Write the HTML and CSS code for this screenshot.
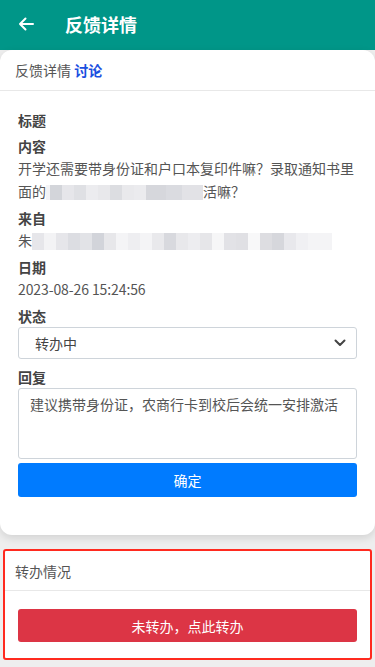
FILE: index.html
```html
<!DOCTYPE html>
<html lang="zh-CN">
<head>
<meta charset="utf-8">
<meta name="viewport" content="width=device-width, initial-scale=1">
<title>反馈详情</title>
<link rel="stylesheet" href="styles.css">
</head>
<body>
<header class="topbar">
  <svg class="back" width="16" height="14" viewBox="0 0 16 14" aria-hidden="true">
    <path d="M15 7H2M7.5 1.5L2 7l5.5 5.5" fill="none" stroke="#fff" stroke-width="2" stroke-linecap="round" stroke-linejoin="round"/>
  </svg>
  <h1 class="title">反馈详情</h1>
</header>

<main class="page">
  <section class="card detail">
    <div class="card-head">反馈详情 <span class="tab-active">讨论</span></div>
    <div class="card-body">
      <div class="label first">标题</div>
      <div class="value"></div>
      <div class="label">内容</div>
      <div class="value"><span class="line">开学还需要带身份证和户口本复印件嘛？录取通知书里</span><span class="line">面的<span class="mosaic m1"></span>活嘛？</span></div>
      <div class="label">来自</div>
      <div class="value">朱<span class="mosaic m2"></span></div>
      <div class="label">日期</div>
      <div class="value date">2023-08-26 15:24:56</div>
      <div class="label">状态</div>
      <div class="select">
        <span>转办中</span>
        <svg class="chev" width="12" height="8" viewBox="0 0 12 8" aria-hidden="true">
          <path d="M1.5 1.5L6 6l4.5-4.5" fill="none" stroke="#444" stroke-width="2" stroke-linecap="round" stroke-linejoin="round"/>
        </svg>
      </div>
      <div class="label reply-label">回复</div>
      <div class="textarea">建议携带身份证，农商行卡到校后会统一安排激活</div>
      <button class="btn btn-primary">确定</button>
    </div>
  </section>

  <section class="card transfer">
    <div class="card-head">转办情况</div>
    <div class="transfer-body">
      <button class="btn btn-danger">未转办，点此转办</button>
    </div>
  </section>
</main>
</body>
</html>
```
FILE: styles.css
```css
* { box-sizing: border-box; }
html, body { margin: 0; padding: 0; }
body {
  background: #eeeeee;
  font-family: "Noto Sans CJK SC", "Noto Sans", sans-serif;
  font-size: 14px;
  color: #555;
  width: 375px;
  height: 667px;
  overflow: hidden;
}
.topbar {
  height: 50px;
  background: #009688;
  display: flex;
  align-items: center;
  padding-left: 18px;
}
.back { display: block; margin-top: -2px; }
.title {
  margin: 0 0 0 31px;
  color: #fff;
  font-size: 18px;
  font-weight: 700;
  line-height: 24px;
  margin-top: -2px;
}
.page { display: flex; flex-direction: column; gap: 14px; }
.card { background: #fff; }
.detail {
  border-radius: 12px;
  box-shadow: 0 3px 8px rgba(0,0,0,0.12);
}
.card-head {
  height: 41px;
  line-height: 40px;
  padding-left: 15px;
  border-bottom: 1px solid #e8e8e8;
  color: #555;
  font-size: 14px;
}
.tab-active { color: #1a4fe0; font-weight: 700; }
.card-body {
  padding: 18px 18px 38px;
  display: flex;
  flex-direction: column;
}
.label {
  font-weight: 700;
  color: #444;
  line-height: 22px;
  margin-top: 4px;
}
.label.first { margin-top: 0; }
.value {
  line-height: 23px;
  color: #555;
}
.line { display: block; white-space: nowrap; }
.date { letter-spacing: -0.1px; }
.mosaic {
  display: inline-block;
  vertical-align: -3px;
}
.m1 {
  width: 157px;
  height: 15px;
  background: linear-gradient(90deg,
    #f4f4f6 0 4px, #d3d5da 4px 16px, #e6e6ea 16px 28px, #dfe0e4 28px 40px, #ececef 40px 52px,
    #e8e8eb 52px 64px, #dcdde1 64px 76px, #e9e9ec 76px 88px, #ebebee 88px 100px,
    #d6d7dc 100px 120px, #dadbe0 120px 136px, #e2e2e6 136px 157px);
}
.m2 {
  width: 300px;
  height: 17px;
  vertical-align: -4px;
  background:
    linear-gradient(90deg,
    #e6e6ea 0 12px, #f3f3f5 12px 24px, #e6e6ea 24px 36px, #dcdde2 36px 48px, #e2e3e7 48px 60px,
    #d2d4da 60px 72px, #e7e7ea 72px 84px, #f4f4f6 84px 96px, #eeeef1 96px 108px, #f4f4f6 108px 120px,
    #e9e9ec 120px 132px, #d8d9de 132px 144px, #e8e8eb 144px 156px, #ededf0 156px 168px,
    #e6e6e9 168px 180px, #f6f6f7 180px 192px, #e2e2e6 192px 204px, #e0e0e4 204px 216px,
    #f8f8f9 216px 228px, #dddde1 228px 240px, #d6d7dc 240px 252px, #e8e8ec 252px 264px,
    #f0f0f3 264px 276px, #f4f4f6 276px 300px);
}
.select {
  height: 32px;
  border: 1px solid #ced4da;
  border-radius: 3px;
  display: flex;
  align-items: center;
  justify-content: space-between;
  padding: 0 10px 0 16px;
  color: #444;
}
.chev { display: block; }
.reply-label { margin-top: 7px; }
.textarea {
  height: 71px;
  border: 1px solid #ced4da;
  border-radius: 3px;
  padding: 4px 11px;
  line-height: 23px;
  color: #555;
}
.btn {
  display: block;
  width: 100%;
  border: 0;
  border-radius: 3px;
  color: #fff;
  font-family: inherit;
  font-size: 14px;
  cursor: pointer;
}
.btn-primary {
  margin-top: 4px;
  height: 34px;
  background: #007bff;
}
.transfer {
  margin: 0 3px;
  border: 2px solid #ff2a1f;
  border-radius: 3px;
}
.transfer .card-head { height: 40px; line-height: 40px; padding-left: 10px; }
.transfer-body { padding: 18px 13px 16px; }
.btn-danger {
  height: 33px;
  background: #dc3545;
}
```
